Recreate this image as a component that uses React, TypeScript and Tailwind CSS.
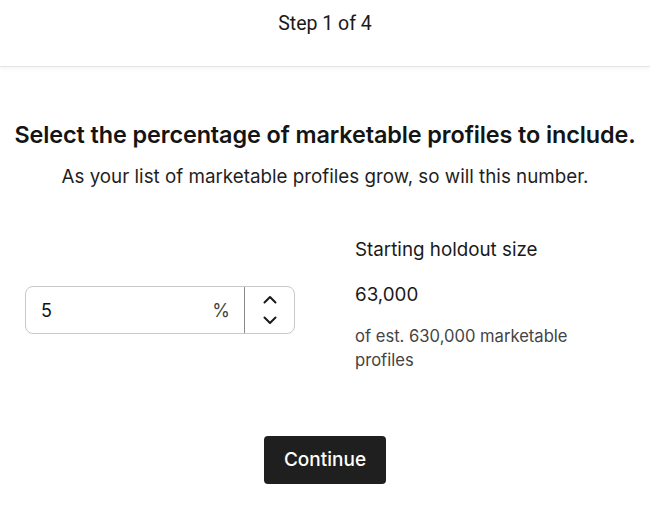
import React from "react";

function Chevron({ up }: { up?: boolean }) {
  return (
    <svg width="14" height="9" viewBox="0 0 14 9" fill="none">
      <path
        d={up ? "M1.5 7.5 L7 2 L12.5 7.5" : "M1.5 1.5 L7 7 L12.5 1.5"}
        stroke="#1a1a1a"
        strokeWidth="2"
        strokeLinecap="round"
        strokeLinejoin="round"
      />
    </svg>
  );
}

export default function App() {
  return (
    <div className="w-[650px] h-[509px] bg-white text-[#1a1a1a] overflow-hidden" style={{ fontFamily: "Inter, 'Noto Sans', sans-serif" }}>
      <header className="h-[67px] border-b border-[#e4e4e7] shadow-[0_2px_4px_rgba(0,0,0,0.04)] flex justify-center pt-[11px]">
        <span className="text-[19.5px] leading-[26px] text-[#1a1a1a]" style={{ fontFamily: "Roboto, sans-serif" }}>
          Step 1 of 4
        </span>
      </header>

      <main className="flex flex-col items-center">
        <h1 className="mt-[53px] text-[23.4px] leading-[30px] font-semibold tracking-[-0.1px] text-[#141414] whitespace-nowrap">
          Select the percentage of marketable profiles to include.
        </h1>
        <p className="mt-[14px] text-[18.8px] leading-[26px] text-[#1f1f1f] whitespace-nowrap">
          As your list of marketable profiles grow, so will this number.
        </p>

        <div className="mt-[48px] w-full flex items-start pl-[25px] gap-[60px]">
          <div className="mt-[48px] w-[270px] h-[48px] flex border border-[#c8c8c8] rounded-[8px]">
            <div className="flex-1 flex items-center justify-between pl-[15px] pr-[14px]">
              <span className="text-[18px] text-[#111]">5</span>
              <span className="text-[18px] text-[#444]">%</span>
            </div>
            <div className="w-[50px] border-l border-[#8a8a8a] flex flex-col items-center justify-center gap-[12px]">
              <Chevron up />
              <Chevron />
            </div>
          </div>

          <div className="w-[245px] flex flex-col">
            <div className="text-[18.8px] leading-[24px] text-[#1a1a1a] whitespace-nowrap">Starting holdout size</div>
            <div className="mt-[21px] text-[18.8px] leading-[24px] text-[#1a1a1a]">63,000</div>
            <div className="mt-[17px] text-[16.6px] leading-[24px] text-[#444]">
              of est. 630,000 marketable profiles
            </div>
          </div>
        </div>

        <button className="mt-[64px] w-[122px] h-[48px] rounded-[4px] bg-[#1f1f1f] text-white text-[19px] font-medium">
          Continue
        </button>
      </main>
    </div>
  );
}
